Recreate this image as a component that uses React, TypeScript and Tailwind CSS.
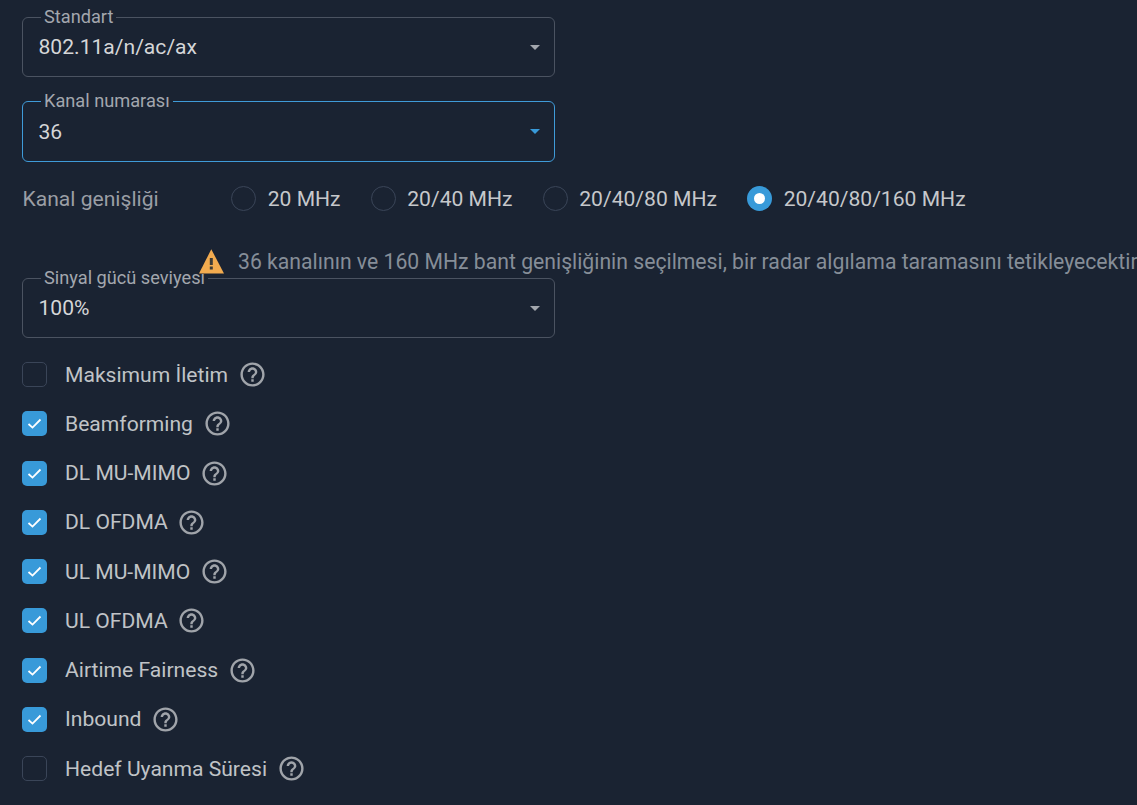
const HELP = "M11 18h2v-2h-2v2zm1-16C6.48 2 2 6.48 2 12s4.48 10 10 10 10-4.48 10-10S17.52 2 12 2zm0 18c-4.41 0-8-3.59-8-8s3.59-8 8-8 8 3.59 8 8-3.59 8-8 8zm0-14c-2.21 0-4 1.79-4 4h2c0-1.1.9-2 2-2s2 .9 2 2c0 2-3 1.75-3 5h2c0-2.25 3-2.5 3-5 0-2.21-1.79-4-4-4z";

function Select({ label, value, focused }: { label: string; value: string; focused?: boolean }) {
  return (
    <div className={`relative w-[533px] rounded-md border flex items-center justify-between pl-[15.5px] pr-[14px] ${focused ? "h-[61px] border-[#3f9bd8]" : "h-[60px] border-[#4b5361]"}`}>
      <span className="absolute left-[18px] -top-[11px] bg-[#1a2332] px-[3px] text-[18.2px] leading-[20px] text-[#a3a7ae] whitespace-nowrap">{label}</span>
      <span className="text-[21.1px] leading-[24px] text-[#d5d6d8]">{value}</span>
      <span className={`w-0 h-0 border-l-[5px] border-r-[5px] border-t-[5px] border-l-transparent border-r-transparent ${focused ? "border-t-[#389ad9]" : "border-t-[#a3a7ae]"}`} />
    </div>
  );
}

function Radio({ label, checked }: { label: string; checked?: boolean }) {
  return (
    <div className="flex items-center gap-[11.7px]">
      {checked ? (
        <span className="w-[25px] h-[25px] rounded-full bg-[#389ad9] flex items-center justify-center">
          <span className="w-[11px] h-[11px] rounded-full bg-white" />
        </span>
      ) : (
        <span className="w-[25px] h-[25px] rounded-full border border-[#3a4558]" />
      )}
      <span className="text-[21.1px] leading-[24px] text-[#c6c8cb] whitespace-nowrap">{label}</span>
    </div>
  );
}

function Check({ label, checked }: { label: string; checked?: boolean }) {
  return (
    <div className="flex items-center h-[49.25px]">
      {checked ? (
        <span className="w-[25px] h-[25px] rounded-[5px] bg-[#389ad9] flex items-center justify-center">
          <svg width="17" height="17" viewBox="0 0 17 17" fill="none">
            <path d="M2.5 9l4 3.6L14.5 4.5" stroke="#fff" strokeWidth="1.8" />
          </svg>
        </span>
      ) : (
        <span className="w-[25px] h-[25px] rounded-[5px] border border-[#3a4558]" />
      )}
      <span className="ml-[18px] text-[21.1px] leading-[24px] text-[#c0c3c7] whitespace-nowrap">{label}</span>
      <svg className="ml-[9.6px]" width="29" height="29" viewBox="0 0 24 24" fill="#a0a4aa">
        <path d={HELP} />
      </svg>
    </div>
  );
}

export default function App() {
  return (
    <div className="h-[805px] w-full overflow-hidden bg-[#1a2332] pl-[22px] pt-[17px] font-['Roboto',sans-serif]">
      <Select label="Standart" value="802.11a/n/ac/ax" />
      <div className="mt-[24px]">
        <Select label="Kanal numarası" value="36" focused />
      </div>
      <div className="mt-[24px] flex items-center h-[25px]">
        <span className="w-[209px] pl-[0.5px] text-[21.1px] leading-[24px] text-[#9a9ea5] whitespace-nowrap">Kanal genişliği</span>
        <div className="flex items-center gap-[30px]">
          <Radio label="20 MHz" />
          <Radio label="20/40 MHz" />
          <Radio label="20/40/80 MHz" />
          <Radio label="20/40/80/160 MHz" checked />
        </div>
      </div>
      <div className="relative z-10 mt-[38px] ml-[177px] flex items-center h-[25px] whitespace-nowrap">
        <svg width="25" height="25" viewBox="0 0 25 25" className="shrink-0 -mt-[1px]">
          <path d="M12.3 0.2L25 24.6H0Z" fill="#f2ab4f" />
          <path d="M10.8 9h3v7h-3zM10.8 17.5h3v3h-3z" fill="#3b3a36" />
        </svg>
        <span className="ml-[14px] mt-[1px] text-[21.19px] leading-[24px] text-[#868e98]">36 kanalının ve 160 MHz bant genişliğinin seçilmesi, bir radar algılama taramasını tetikleyecektir</span>
      </div>
      <div className="mt-[3px] pt-[1px]">
        <Select label="Sinyal gücü seviyesi" value="100%" />
      </div>
      <div className="mt-[12px] flex flex-col">
        <Check label="Maksimum İletim" />
        <Check label="Beamforming" checked />
        <Check label="DL MU-MIMO" checked />
        <Check label="DL OFDMA" checked />
        <Check label="UL MU-MIMO" checked />
        <Check label="UL OFDMA" checked />
        <Check label="Airtime Fairness" checked />
        <Check label="Inbound" checked />
        <Check label="Hedef Uyanma Süresi" />
      </div>
    </div>
  );
}
